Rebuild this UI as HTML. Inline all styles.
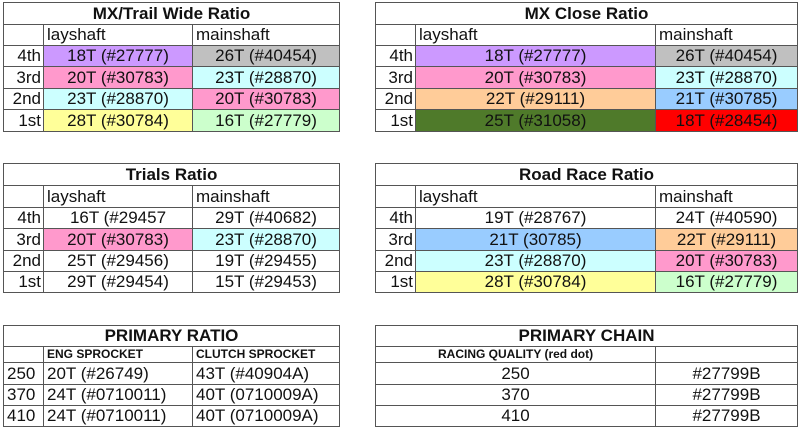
<!DOCTYPE html>
<html><head><meta charset="utf-8"><style>
body{margin:0;width:799px;height:428px;background:#fff;position:relative;overflow:hidden;font-family:"Liberation Sans",Arial,sans-serif;color:#111}
table{position:absolute;border-collapse:collapse;table-layout:fixed;border:1.5px solid #333}
td{border:1px solid #555;padding:0 3px;font-size:17px;line-height:18px;white-space:nowrap;overflow:hidden;text-align:center}
td.t{font-weight:bold;font-size:17px}
td.l{text-align:right;padding-right:2px}
td.h{text-align:left}
td.hb{text-align:left;font-weight:bold;font-size:12px;line-height:13px}
.pu{background:#cc99ff}.gr{background:#c0c0c0}.pk{background:#ff99cc}.cy{background:#ccffff}.ye{background:#ffff99}.lg{background:#ccffcc}.pe{background:#ffcc99}.bl{background:#99ccff}.dg{background:#4f7a2a}.rd{background:#ff0000}
</style></head><body>

<table style="left:3px;top:2px;width:336px">
<colgroup><col style="width:40px"><col style="width:149px"><col style="width:147px"></colgroup>
<tr style="height:22px"><td class="t" colspan="3">MX/Trail Wide Ratio</td></tr>
<tr style="height:21px"><td></td><td class="h">layshaft</td><td class="h">mainshaft</td></tr>
<tr style="height:21px"><td class="l">4th</td><td class="pu">18T (#27777)</td><td class="gr">26T (#40454)</td></tr>
<tr style="height:22px"><td class="l">3rd</td><td class="pk">20T (#30783)</td><td class="cy">23T (#28870)</td></tr>
<tr style="height:21px"><td class="l">2nd</td><td class="cy">23T (#28870)</td><td class="pk">20T (#30783)</td></tr>
<tr style="height:22px"><td class="l">1st</td><td class="ye">28T (#30784)</td><td class="lg">16T (#27779)</td></tr>
</table>

<table style="left:375px;top:2px;width:422px">
<colgroup><col style="width:40px"><col style="width:240px"><col style="width:142px"></colgroup>
<tr style="height:22px"><td class="t" colspan="3">MX Close Ratio</td></tr>
<tr style="height:21px"><td></td><td class="h">layshaft</td><td class="h">mainshaft</td></tr>
<tr style="height:21px"><td class="l">4th</td><td class="pu">18T (#27777)</td><td class="gr">26T (#40454)</td></tr>
<tr style="height:22px"><td class="l">3rd</td><td class="pk">20T (#30783)</td><td class="cy">23T (#28870)</td></tr>
<tr style="height:21px"><td class="l">2nd</td><td class="pe">22T (#29111)</td><td class="bl">21T (#30785)</td></tr>
<tr style="height:22px"><td class="l">1st</td><td class="dg">25T (#31058)</td><td class="rd">18T (#28454)</td></tr>
</table>

<table style="left:3px;top:163px;width:336px">
<colgroup><col style="width:40px"><col style="width:149px"><col style="width:147px"></colgroup>
<tr style="height:22px"><td class="t" colspan="3">Trials Ratio</td></tr>
<tr style="height:22px"><td></td><td class="h">layshaft</td><td class="h">mainshaft</td></tr>
<tr style="height:21px"><td class="l">4th</td><td>16T (#29457</td><td>29T (#40682)</td></tr>
<tr style="height:22px"><td class="l">3rd</td><td class="pk">20T (#30783)</td><td class="cy">23T (#28870)</td></tr>
<tr style="height:21px"><td class="l">2nd</td><td>25T (#29456)</td><td>19T (#29455)</td></tr>
<tr style="height:21px"><td class="l">1st</td><td>29T (#29454)</td><td>15T (#29453)</td></tr>
</table>

<table style="left:375px;top:163px;width:422px">
<colgroup><col style="width:40px"><col style="width:240px"><col style="width:142px"></colgroup>
<tr style="height:22px"><td class="t" colspan="3">Road Race Ratio</td></tr>
<tr style="height:22px"><td></td><td class="h">layshaft</td><td class="h">mainshaft</td></tr>
<tr style="height:21px"><td class="l">4th</td><td>19T (#28767)</td><td>24T (#40590)</td></tr>
<tr style="height:22px"><td class="l">3rd</td><td class="bl">21T (30785)</td><td class="pe">22T (#29111)</td></tr>
<tr style="height:21px"><td class="l">2nd</td><td class="cy">23T (#28870)</td><td class="pk">20T (#30783)</td></tr>
<tr style="height:21px"><td class="l">1st</td><td class="ye">28T (#30784)</td><td class="lg">16T (#27779)</td></tr>
</table>

<table style="left:3px;top:325px;width:336px">
<colgroup><col style="width:40px"><col style="width:149px"><col style="width:147px"></colgroup>
<tr style="height:21px"><td class="t" colspan="3">PRIMARY RATIO</td></tr>
<tr style="height:16px"><td></td><td class="hb">ENG SPROCKET</td><td class="hb">CLUTCH SPROCKET</td></tr>
<tr style="height:22px"><td class="h">250</td><td class="h">20T (#26749)</td><td class="h">43T (#40904A)</td></tr>
<tr style="height:21px"><td class="h">370</td><td class="h">24T (#0710011)</td><td class="h">40T (0710009A)</td></tr>
<tr style="height:21px"><td class="h">410</td><td class="h">24T (#0710011)</td><td class="h">40T (0710009A)</td></tr>
</table>

<table style="left:375px;top:325px;width:422px">
<colgroup><col style="width:280px"><col style="width:142px"></colgroup>
<tr style="height:21px"><td class="t" colspan="2">PRIMARY CHAIN</td></tr>
<tr style="height:16px"><td class="hb" style="padding-left:62px">RACING QUALITY (red dot)</td><td></td></tr>
<tr style="height:22px"><td>250</td><td>#27799B</td></tr>
<tr style="height:21px"><td>370</td><td>#27799B</td></tr>
<tr style="height:21px"><td>410</td><td>#27799B</td></tr>
</table>

</body></html>
